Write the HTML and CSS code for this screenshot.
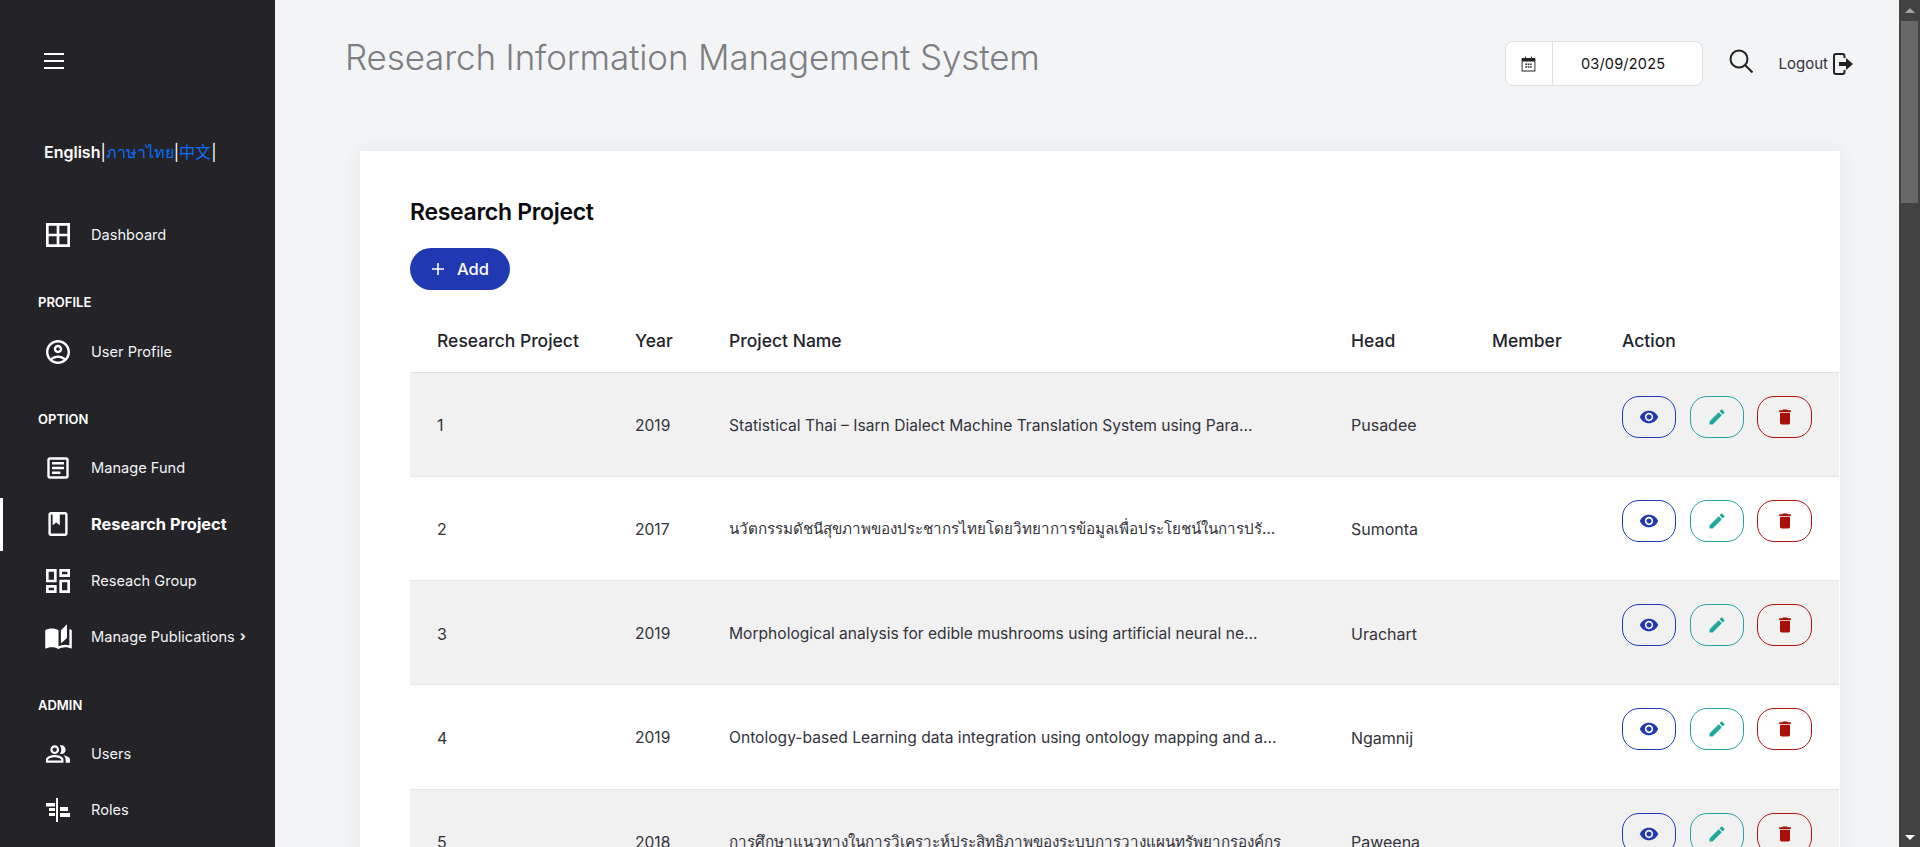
FILE: index.html
```html
<!DOCTYPE html>
<html lang="en">
<head>
<meta charset="utf-8">
<title>Research Information Management System</title>
<link rel="stylesheet" href="styles.css">
</head>
<body>
<svg class="defs" aria-hidden="true">
  <symbol id="i-eye" viewBox="0 0 24 24"><path d="M12 4.500C7 4.500 2.730 7.610 1 12c1.730 4.390 6 7.500 11 7.500s9.270-3.110 11-7.500c-1.730-4.390-6-7.500-11-7.500zM12 17c-2.760 0-5-2.240-5-5s2.240-5 5-5 5 2.240 5 5-2.240 5-5 5zm0-8c-1.660 0-3 1.340-3 3s1.340 3 3 3 3-1.340 3-3-1.340-3-3-3z"/></symbol>
  <symbol id="i-edit" viewBox="0 0 24 24"><path d="M3 17.250V21h3.750L17.810 9.940l-3.750-3.750zM20.710 7.040a1 1 0 0 0 0-1.410l-2.340-2.340a1 1 0 0 0-1.410 0l-1.830 1.830 3.750 3.750z"/></symbol>
  <symbol id="i-del" viewBox="0 0 24 24"><path d="M6 19c0 1.100.9 2 2 2h8c1.100 0 2-.9 2-2V7H6zM19 4h-3.500l-1-1h-5l-1 1H5v2h14z"/></symbol>
</svg>
<div class="app">
  <aside class="sidebar">
    <button class="burger" aria-label="Menu"><span></span><span></span><span></span></button>
    <div class="lang"><b>English</b><i>|</i><a>ภาษาไทย</a><i>|</i><a>中文</a><i>|</i></div>
    <nav class="nav">
      <a class="item"><svg viewBox="3 3 18 18" class="ico"><path d="M3 3v18h18V3zm8 16H5v-6h6zm0-8H5V5h6zm8 8h-6v-6h6zm0-8h-6V5h6z"/></svg><span>Dashboard</span></a>
      <h4 class="section s-profile">PROFILE</h4>
      <a class="item"><svg viewBox="2 2 20 20" class="ico"><path d="M12 2C6.480 2 2 6.480 2 12s4.480 10 10 10 10-4.480 10-10S17.520 2 12 2zM7.350 18.500C8.660 17.560 10.260 17 12 17s3.340.56 4.650 1.500C15.340 19.440 13.740 20 12 20s-3.340-.56-4.650-1.500zm10.790-1.380C16.450 15.800 14.320 15 12 15s-4.450.8-6.140 2.120C4.700 15.730 4 13.950 4 12c0-4.420 3.580-8 8-8s8 3.580 8 8c0 1.950-.7 3.730-1.860 5.120zM12 6c-1.930 0-3.500 1.570-3.500 3.500S10.070 13 12 13s3.500-1.570 3.500-3.500S13.930 6 12 6zm0 5c-.83 0-1.500-.67-1.500-1.500S11.170 8 12 8s1.500.67 1.500 1.500S12.830 11 12 11z"/></svg><span>User Profile</span></a>
      <h4 class="section s-option">OPTION</h4>
      <a class="item"><svg viewBox="1.900 1.900 20.200 20.200" class="ico"><path d="M19 5v14H5V5h14m0-2H5c-1.100 0-2 .9-2 2v14c0 1.100.9 2 2 2h14c1.100 0 2-.9 2-2V5c0-1.100-.9-2-2-2zM14 17H7v-2h7zm3-4H7v-2h10zm0-4H7V7h10z"/></svg><span>Manage Fund</span></a>
      <a class="item active"><svg viewBox="2 2 20 20" class="ico"><path d="M18 2H6c-1.100 0-2 .9-2 2v16c0 1.100.9 2 2 2h12c1.100 0 2-.9 2-2V4c0-1.100-.9-2-2-2zm0 18H6V4h1.500v9l3-2.250 3 2.250V4H18z"/></svg><span>Research Project</span></a>
      <a class="item"><svg viewBox="3 3 18 18" class="ico"><path d="M19 5v2h-4V5h4M9 5v6H5V5h4m10 8v6h-4v-6h4M9 17v2H5v-2h4M21 3h-8v6h8V3zM11 3H3v10h8V3zm10 8h-8v10h8V11zm-10 4H3v6h8v-6z"/></svg><span>Reseach Group</span></a>
      <a class="item"><svg viewBox="0 0 24 24" class="ico wide"><path fill-rule="evenodd" d="M19 1l-5 5v11l5-4.500zM1 6v14.650c0 .25.25.5.5.5.100 0 .15-.05.25-.05C3.100 20.450 5.050 20 6.500 20c1.950 0 4.050.4 5.500 1.500V6c-1.450-1.100-3.550-1.500-5.500-1.500S2.450 4.900 1 6zm22 13.500V6c-.6-.45-1.250-.75-2-1v13.500c-1.100-.35-2.300-.5-3.500-.5-1.700 0-4.150.65-5.500 1.500v2c1.350-.85 3.800-1.500 5.500-1.500 1.650 0 3.350.3 4.750 1.050.1.050.15.050.25.050.25 0 .5-.25.5-.5v-1.100z"/></svg><span>Manage Publications</span><em>›</em></a>
      <h4 class="section s-admin">ADMIN</h4>
      <a class="item"><svg viewBox="1 1 22 22" class="ico"><path d="M16.670 13.130C18.040 14.060 19 15.320 19 17v3h4v-3c0-2.180-3.570-3.470-6.330-3.870zM15 12c2.210 0 4-1.790 4-4s-1.790-4-4-4c-.47 0-.91.1-1.330.24C14.500 5.270 15 6.580 15 8s-.5 2.730-1.330 3.760c.42.14.86.24 1.330.24zM9 12c2.210 0 4-1.790 4-4s-1.790-4-4-4-4 1.790-4 4 1.790 4 4 4zm0-6c1.100 0 2 .9 2 2s-.9 2-2 2-2-.9-2-2 .9-2 2-2zM9 13c-2.670 0-8 1.340-8 4v3h16v-3c0-2.660-5.330-4-8-4zm6 5H3v-.99C3.200 16.290 6.300 15 9 15s5.800 1.290 6 2z"/></svg><span>Users</span></a>
      <a class="item"><svg viewBox="0 0 24 24" class="ico"><path d="M10 0h2v24h-2zM0 5h9v3.500H0zM3 10h6v3H3zM14 9h8v4h-8zM3 15h6v3H3zM14 15h10v4H14z"/></svg><span>Roles</span></a>
    </nav>
  </aside>
  <main class="main">
    <header class="top">
      <h1 class="title">Research Information Management System</h1>
      <div class="tools">
        <div class="date">
          <span class="date-ico"><svg viewBox="0 0 24 24"><path fill-rule="evenodd" d="M6.500 0h1.500v2.500h8V0h1.500v2.500H22a1 1 0 0 1 1 1V23a1 1 0 0 1-1 1H2a1 1 0 0 1-1-1V3.500a1 1 0 0 1 1-1h4.500zM2.500 8v14.500h19V8zM7 11h2.500v2.500H7zm3.800 0h2.500v2.500h-2.500zm3.800 0h2.500v2.500h-2.500zM7 15.500h2.500V18H7zm3.800 0h2.500V18h-2.500zm3.800 0h2.500V18h-2.500z"/></svg></span>
          <span class="date-val">03/09/2025</span>
        </div>
        <svg class="search" viewBox="0 0 24 24"><circle cx="10" cy="10" r="8.500" fill="none" stroke="#222" stroke-width="2"/><path d="M16 16l7.500 7.500" stroke="#222" stroke-width="2" fill="none"/></svg>
        <a class="logout"><span>Logout</span><svg viewBox="0 0 20 22"><path d="M11.500 5V3a2 2 0 0 0-2-2H3a2 2 0 0 0-2 2v16a2 2 0 0 0 2 2h6.500a2 2 0 0 0 2-2v-2" fill="none" stroke="#222" stroke-width="2"/><path d="M6 9h7V5l7 6-7 6v-4H6z" fill="#222"/></svg></a>
      </div>
    </header>
    <section class="card">
      <h2 class="card-title">Research Project</h2>
      <button class="add"><svg viewBox="0 0 14 14"><path d="M7 1v12M1 7h12" stroke="#fff" stroke-width="1.600" fill="none"/></svg><span>Add</span></button>
      <table class="grid">
        <colgroup><col class="c1"><col class="c2"><col class="c3"><col class="c4"><col class="c5"><col class="c6"></colgroup>
        <thead><tr><th>Research Project</th><th>Year</th><th>Project Name</th><th>Head</th><th>Member</th><th>Action</th></tr></thead>
        <tbody>
          <tr><td>1</td><td class="yr">2019</td><td class="name">Statistical Thai – Isarn Dialect Machine Translation System using Para...</td><td>Pusadee</td><td></td><td class="acts"><button class="act v"><svg><use href="#i-eye"/></svg></button><button class="act e"><svg><use href="#i-edit"/></svg></button><button class="act d"><svg><use href="#i-del"/></svg></button></td></tr>
          <tr><td>2</td><td class="yr">2017</td><td class="name th">นวัตกรรมดัชนีสุขภาพของประชากรไทยโดยวิทยาการข้อมูลเพื่อประโยชน์ในการปรั...</td><td>Sumonta</td><td></td><td class="acts"><button class="act v"><svg><use href="#i-eye"/></svg></button><button class="act e"><svg><use href="#i-edit"/></svg></button><button class="act d"><svg><use href="#i-del"/></svg></button></td></tr>
          <tr><td>3</td><td class="yr">2019</td><td class="name">Morphological analysis for edible mushrooms using artificial neural ne...</td><td>Urachart</td><td></td><td class="acts"><button class="act v"><svg><use href="#i-eye"/></svg></button><button class="act e"><svg><use href="#i-edit"/></svg></button><button class="act d"><svg><use href="#i-del"/></svg></button></td></tr>
          <tr><td>4</td><td class="yr">2019</td><td class="name">Ontology-based Learning data integration using ontology mapping and a...</td><td>Ngamnij</td><td></td><td class="acts"><button class="act v"><svg><use href="#i-eye"/></svg></button><button class="act e"><svg><use href="#i-edit"/></svg></button><button class="act d"><svg><use href="#i-del"/></svg></button></td></tr>
          <tr><td>5</td><td class="yr">2018</td><td class="name th">การศึกษาแนวทางในการวิเคราะห์ประสิทธิภาพของระบบการวางแผนทรัพยากรองค์กร</td><td>Paweena</td><td></td><td class="acts"><button class="act v"><svg><use href="#i-eye"/></svg></button><button class="act e"><svg><use href="#i-edit"/></svg></button><button class="act d"><svg><use href="#i-del"/></svg></button></td></tr>
        </tbody>
      </table>
    </section>
  </main>
  <div class="scrollbar"><span class="arrow up"></span><div class="thumb"></div><span class="arrow down"></span></div>
</div>
</body>
</html>
```

FILE: styles.css
```css
* { box-sizing: border-box; }
html, body { margin: 0; height: 100%; overflow: hidden; }
body { font-family: Inter, "Noto Sans", "Noto Sans CJK SC", sans-serif; background: #f3f4f6; color: #23232a; }
.defs { display: none; }
.app { display: grid; grid-template-columns: 275px 1fr 21px; height: 847px; overflow: hidden; }

.sidebar { background: #232328; color: #fff; padding: 53px 0 0; overflow: hidden; }
.burger { display: flex; flex-direction: column; gap: 5px; background: none; border: 0; padding: 0; margin-left: 44px; width: 20px; }
.burger span { display: block; height: 2px; width: 20px; background: #fff; }
.lang { margin: 73px 0 0 44px; height: 20px; line-height: 20px; font-size: 16px; white-space: nowrap; }
.lang b { font-weight: 600; }
.lang i { font-style: normal; font-weight: 400; }
.lang a { color: #0d6efd; font-weight: 400; }
.nav { margin-top: 46px; }
.item { display: flex; align-items: center; height: 53px; margin-bottom: 3.500px; padding-left: 46px; font-size: 14.600px; position: relative; color: #f3f4f6; }
.item span { margin-left: 21px; }
.ico { width: 24px; height: 24px; fill: #fff; flex: none; }
.ico.wide { width: 29px; height: 29px; margin: 0 -2.500px; }
.item em { font-style: normal; margin-left: 5px; font-weight: 700; font-size: 14px; line-height: 1; margin-top: -3px; }
.item.active { color: #fff; font-weight: 700; font-size: 16.400px; }
.item.active::before { content: ""; position: absolute; left: 0; top: 0; width: 3px; height: 53px; background: #fff; }
.section { margin: 0; padding-left: 38px; font-size: 13px; font-weight: 600; color: #fff; line-height: 16px; }
.s-profile { margin-top: 32.500px; margin-bottom: 15.500px; }
.s-option { margin-top: 32.500px; margin-bottom: 14.500px; }
.s-admin { margin-top: 33px; margin-bottom: 14.500px; }

.main { min-width: 0; overflow: hidden; padding: 0 59px 0 70px; background: #f3f4f6; }
.top { display: flex; justify-content: space-between; align-items: flex-start; height: 151px; }
.title { margin: 35px 0 0; font-size: 35px; line-height: 44px; font-weight: 300; color: #7d7e82; letter-spacing: -.15px; }
.tools { display: flex; align-items: center; margin-top: 41px; margin-right: -13px; }
.date { display: flex; width: 198px; height: 45px; background: #fff; border: 1px solid #dee2e6; border-radius: 8px; font-size: 14.500px; color: #111; }
.date-ico { width: 47px; display: flex; align-items: center; justify-content: center; border-right: 1px solid #dee2e6; }
.date-ico svg { width: 15px; height: 16px; fill: #222; }
.date-val { flex: 1; display: flex; align-items: center; justify-content: center; letter-spacing: .2px; padding-right: 8px; }
.search { width: 24px; height: 24px; margin-left: 26px; margin-top: -5px; }
.logout { display: flex; align-items: center; margin-left: 26px; font-size: 15px; color: #33333a; }
.logout svg { width: 20px; height: 22px; margin-left: 5px; }

.card { margin-left: 15px; background: #fff; padding: 45px 0 0 50px; height: 900px; box-shadow: 0 0 20px rgba(0,0,0,.07); width: 1480px; }
.card-title { margin: 0; font-size: 23px; line-height: 32px; font-weight: 600; color: #0b0b0f; letter-spacing: -.3px; }
.add { display: flex; align-items: center; margin-top: 20px; width: 100px; height: 42px; border: 0; border-radius: 21px; background: #2039b3; color: #fff; font: 500 16.500px Inter, sans-serif; padding: 0 0 0 21px; }
.add svg { width: 14px; height: 14px; margin-right: 12px; }
.grid { border-collapse: collapse; table-layout: fixed; width: 1429px; margin-top: 20px; }
.c1 { width: 225px; } .c2 { width: 94px; } .c3 { width: 622px; } .c4 { width: 141px; } .c5 { width: 130px; } .c6 { width: 217px; }
.grid th { height: 62px; padding: 0 0 0 27px; text-align: left; font-size: 17.500px; font-weight: 500; color: #23232a; border-bottom: 1px solid #dfe1e8; }
.grid th:nth-child(n+2), .grid td:nth-child(n+2) { padding-left: 0; }
.grid td { height: 104.250px; padding: 2px 0 0 27px; font-size: 16px; color: #33333a; border-bottom: 1px solid #e5e5e8; white-space: nowrap; overflow: hidden; }
.grid td.yr, .grid td.name { font-size: 15.600px; }
.grid td.th { font-size: 15.200px; }
.grid tbody tr:nth-child(odd) td { background: #f1f1f2; }
.grid td.acts { vertical-align: top; padding-top: 23px; }
.act { width: 54px; height: 42px; border-radius: 17px; border: 1.500px solid; background: transparent; padding: 0; margin-right: 14px; display: inline-flex; align-items: center; justify-content: center; vertical-align: top; }
.act svg { width: 20px; height: 20px; }
.act.v { border-color: #2039b3; } .act.v svg { fill: #2039b3; }
.act.e { border-color: #1ea79a; margin-right: 13px; } .act.e svg { fill: #1ea79a; }
.act.d { border-color: #b3150c; width: 55px; } .act.d svg { fill: #a80f05; }

.scrollbar { background: #424242; display: flex; flex-direction: column; align-items: center; padding: 8px 2px 8px 2px; }
.arrow { width: 0; height: 0; border-left: 5px solid transparent; border-right: 5px solid transparent; flex: none; }
.arrow.up { border-bottom: 5px solid #a3a3a3; }
.arrow.down { border-top: 5px solid #fff; margin-top: auto; margin-bottom: -1px; }
.thumb { width: 17px; height: 182px; margin-top: 8px; background: #686868; }
```
